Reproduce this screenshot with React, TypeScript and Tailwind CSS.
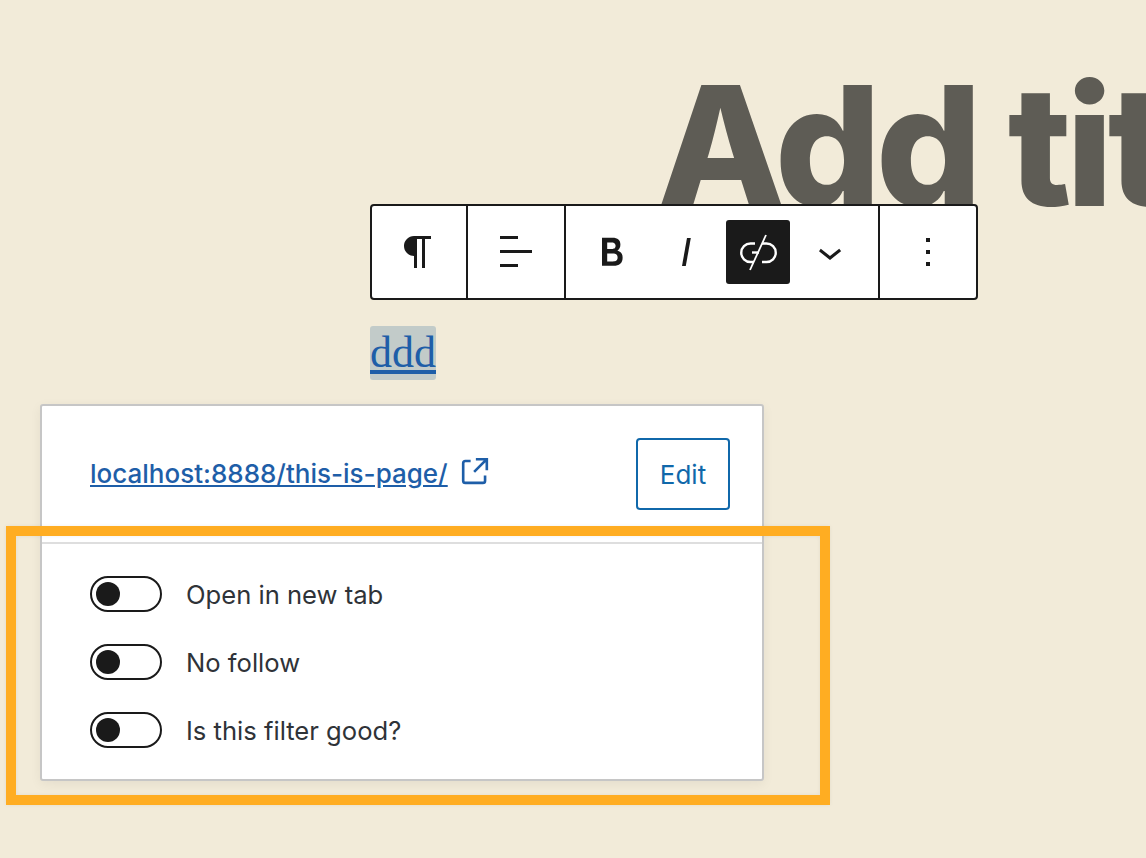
const Icon = ({ d, className = "" }: { d: string; className?: string }) => (
  <svg viewBox="0 0 24 24" className={`w-12 h-12 fill-current ${className}`}>
    <path d={d} />
  </svg>
);

const paragraph =
  "m9.99609 14v-.2251l.00391.0001v6.225h1.5v-14.5h2.5v14.5h1.5v-14.5h3v-1.5h-8.50391c-2.76142 0-5 2.23858-5 5 0 2.7614 2.23858 5 5 5z";
const alignLeft = "M13 5.5H4V4h9v1.5Zm7 7H4V11h16v1.5Zm-7 7H4V18h9v1.5Z";
const bold =
  "M14.7 11.3c1-.6 1.5-1.6 1.5-3 0-2.3-1.3-3.4-4-3.4H7v14h5.8c1.4 0 2.5-.3 3.3-1 .8-.7 1.2-1.7 1.2-2.9.1-1.9-.8-3.1-2.6-3.7zm-5.1-4h2.3c.6 0 1.1.1 1.4.4.3.3.5.7.5 1.2s-.2 1-.5 1.2c-.3.3-.8.4-1.4.4H9.6V7.3zm4.6 9c-.4.3-1 .4-1.7.4H9.6v-3.9h2.9c.7 0 1.3.2 1.7.5.4.3.6.8.6 1.5s-.2 1.2-.6 1.5z";
const italic = "M12.5 5L10 19h1.9l2.5-14z";
const chevronDown = "M17.5 11.6L12 16l-5.5-4.4.9-1.2L12 14l4.6-3.6 1 1.2z";
const moreVertical = "M13 19h-2v-2h2v2zm0-6h-2v-2h2v2zm0-6h-2V5h2v2z";
const external =
  "M19.5 4.5h-7V6h4.44l-5.97 5.97 1.06 1.06L18 7.06v4.44h1.5v-7Zm-13 1a2 2 0 0 0-2 2v10a2 2 0 0 0 2 2h10a2 2 0 0 0 2-2v-3H17v3a.5.5 0 0 1-.5.5h-10a.5.5 0 0 1-.5-.5v-10a.5.5 0 0 1 .5-.5h3V5.5h-3Z";

const LinkOffIcon = () => (
  <svg viewBox="0 0 48 48" className="w-12 h-12 fill-none stroke-white stroke-[2.4px]">
    <path d="M21 15.5h-4.5a9 9 0 0 0 0 18.5H20" />
    <path d="M28 15.5h4.5a9 9 0 0 1 0 18.5H28" />
    <path d="M18 24.5h7" />
    <path d="M32 7 16 42" strokeWidth="1.8" />
  </svg>
);

const ToggleRow = ({ label }: { label: string }) => (
  <div className="flex items-center h-9">
    <div className="w-[72px] h-9 rounded-full border-2 border-[#1a1a1a] bg-white flex items-center pl-1">
      <div className="w-6 h-6 rounded-full bg-[#1a1a1a]" />
    </div>
    <span className="ml-6 pt-[2px] text-[25.6px] text-[#2f3338]">{label}</span>
  </div>
);

const App = () => {
  return (
    <div className="relative w-[1146px] h-[858px] overflow-hidden bg-[#f2ebd9] font-['Inter',sans-serif]">
      <div className="h-[204px] pl-[657px] pt-[60px] whitespace-nowrap text-[167px] leading-[170px] font-extrabold tracking-[-5.5px] text-[#5e5c55]">
        Add title
      </div>

      <div className="relative z-10 ml-[370px] w-[608px] h-24 flex border-2 border-[#1a1a1a] rounded-[4px] bg-white text-[#1a1a1a]">
        <div className="w-24 flex items-center justify-center pr-[2px] border-r-2 border-[#1a1a1a]">
          <Icon d={paragraph} />
        </div>
        <div className="w-[98px] flex items-center justify-center border-r-2 border-[#1a1a1a]">
          <Icon d={alignLeft} />
        </div>
        <div className="w-[314px] flex items-center pl-[14px] border-r-2 border-[#1a1a1a]">
          <div className="w-16 h-16 flex items-center justify-center">
            <Icon d={bold} />
          </div>
          <div className="ml-[10px] w-16 h-16 flex items-center justify-center">
            <Icon d={italic} />
          </div>
          <div className="ml-2 w-16 h-16 flex items-center justify-center rounded-[3px] bg-[#1a1a1a]">
            <LinkOffIcon />
          </div>
          <div className="ml-2 w-16 h-16 flex items-center justify-center">
            <Icon d={chevronDown} />
          </div>
        </div>
        <div className="flex-1 flex items-center justify-center">
          <Icon d={moreVertical} />
        </div>
      </div>

      <div className="ml-[370px] mt-[26px] w-[66px] h-[54px] rounded-[3px] bg-[#c2cbc9] font-['Liberation_Serif',serif] text-[44px] leading-[54px] text-[#1e5ea8] underline decoration-[4px] underline-offset-[3px]">
        ddd
      </div>

      <div className="ml-10 mt-6 w-[724px] h-[377px] border-2 border-[#c6c6c6] rounded-[3px] bg-white shadow-[0_3px_12px_rgba(0,0,0,0.06)]">
        <div className="flex items-center justify-between pl-12 pr-8 pt-8 pb-8 border-b-2 border-[#dedede]">
          <div className="flex items-center">
            <a className="pb-[2px] text-[26px] font-medium text-[#1e5ea8] underline">localhost:8888/this-is-page/</a>
            <svg viewBox="0 0 24 24" className="ml-[6px] -mt-[6px] w-[42px] h-[42px] fill-[#1e5ea8]">
              <path d={external} />
            </svg>
          </div>
          <button className="w-[94px] h-[72px] rounded-[4px] border-2 border-[#1068aa] text-[26px] text-[#1068aa]">
            Edit
          </button>
        </div>
        <div className="flex flex-col gap-8 pl-12 pt-8">
          <ToggleRow label="Open in new tab" />
          <ToggleRow label="No follow" />
          <ToggleRow label="Is this filter good?" />
        </div>
      </div>

      {/* annotation frame drawn over the screenshot */}
      <div className="absolute left-[6px] top-[526px] w-[824px] h-[279px] border-[10px] border-[#ffad22] shadow-[0_0_4px_rgba(0,0,0,0.06),inset_0_0_4px_rgba(0,0,0,0.06)]" />
    </div>
  );
};

export default App;
